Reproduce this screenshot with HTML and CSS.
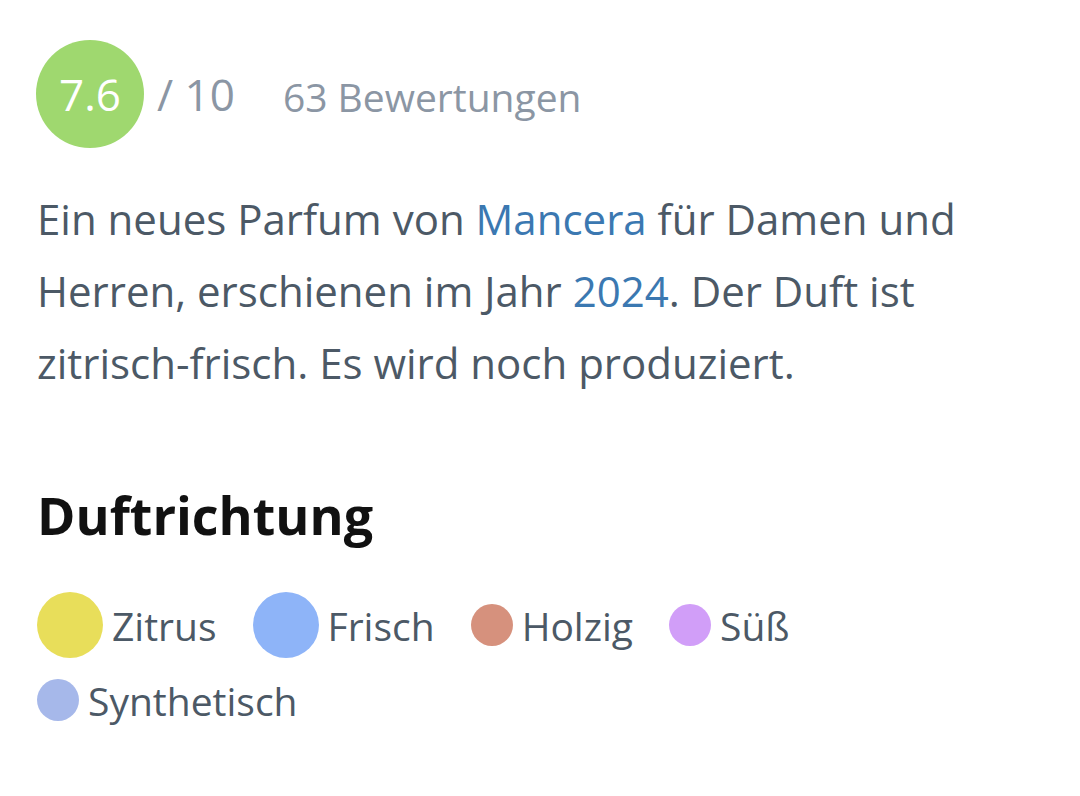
FILE: index.html
```html
<!DOCTYPE html>
<html lang="de">
  <head>
    <meta charset="UTF-8">
    <meta name="viewport" content="width=device-width,initial-scale=1.0">
    <link rel="stylesheet" href="styles.css">
    <title>Mancera Parfum</title>
  </head>
  <body>
    <div class="rating">
      <span class="score">7.6</span>
      <span class="outof">/ 10</span>
      <span class="votes">63 Bewertungen</span>
    </div>

    <p class="intro">
      Ein neues Parfum von <a href="#">Mancera</a> für Damen und
      Herren, erschienen im Jahr <a href="#">2024</a>. Der Duft ist
      zitrisch-frisch. Es wird noch produziert.
    </p>

    <h2>Duftrichtung</h2>

    <div class="accords">
      <span class="accord"><i class="dot big" style="background:#e8de5a"></i>Zitrus</span>
      <span class="accord"><i class="dot big" style="background:#8eb4f8"></i>Frisch</span>
      <span class="accord"><i class="dot" style="background:#d6917d"></i>Holzig</span>
      <span class="accord"><i class="dot" style="background:#d19ef8"></i>Süß</span>
      <span class="accord"><i class="dot" style="background:#a6b8ea"></i>Synthetisch</span>
    </div>
  </body>
</html>
```

FILE: styles.css
```css
body {
  margin: 0;
  padding: 40px 37px;
  background: #fff;
  font-family: "Open Sans", sans-serif;
  color: #4c5966;
}

.rating {
  display: flex;
  align-items: center;
}
.score {
  width: 108px;
  height: 108px;
  border-radius: 50%;
  background: #9fd86f;
  color: #fff;
  font-size: 44px;
  display: flex;
  align-items: center;
  justify-content: center;
  margin-left: -1px;
}
.outof {
  font-size: 44px;
  color: #8b96a4;
  margin-left: 13px;
}
.votes {
  font-size: 39px;
  color: #8b96a4;
  margin-left: 48px;
  padding-top: 4px;
}

.intro {
  font-size: 42px;
  line-height: 72px;
  margin: 35px 0 0;
  max-width: 980px;
}
.intro a {
  color: #3b78b1;
  text-decoration: none;
}

h2 {
  font-size: 52px;
  font-weight: 700;
  color: #111;
  margin: 80px 0 42px;
}

.accords {
  display: flex;
  flex-wrap: wrap;
  align-items: center;
  column-gap: 36px;
  row-gap: 9px;
  font-size: 39px;
}
.accord {
  display: flex;
  align-items: center;
  gap: 9px;
  height: 66px;
}
.dot {
  width: 42px;
  height: 42px;
  border-radius: 50%;
}
.dot.big {
  width: 66px;
  height: 66px;
}
```
